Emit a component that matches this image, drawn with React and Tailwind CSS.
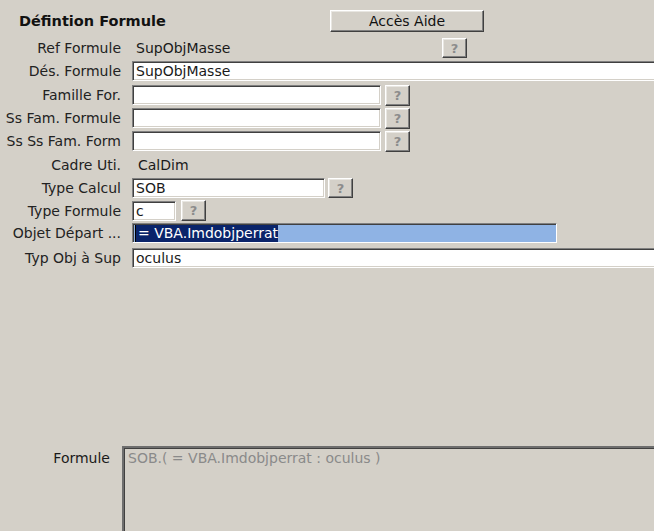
import React from "react";

const sunken =
  "bg-white border-t border-l border-[#808080] border-b border-r border-b-white border-r-white shadow-[inset_1px_1px_0_#404040,inset_-1px_-1px_0_#d4d0c8]";
const raised =
  "bg-[#d4d0c8] border-t border-l border-white border-b border-r border-b-[#404040] border-r-[#404040] shadow-[inset_-1px_-1px_0_#808080,inset_1px_1px_0_#e8e6e1]";

function Q({ className = "" }) {
  return (
    <div className={`${raised} shrink-0 flex items-center justify-center text-[#8c8c8c] text-[13px] font-bold leading-none ${className}`}>
      ?
    </div>
  );
}

function Field({ w, value = "", className = "" }) {
  return (
    <div className={`${sunken} shrink-0 h-[20px] ${w} flex items-center pl-[3px] whitespace-nowrap overflow-hidden leading-[18px] ${className}`}>
      {value}
    </div>
  );
}

function Row({ label, h, children }) {
  return (
    <div className={`flex items-start ${h}`}>
      <div className="w-[121px] shrink-0 text-right leading-[20px] whitespace-nowrap text-[#222]">{label}</div>
      <div className="ml-[11px] shrink-0 flex items-start">{children}</div>
    </div>
  );
}

export default function App() {
  return (
    <div className="w-[654px] h-[531px] overflow-hidden bg-[#d4d0c8] font-['DejaVu_Sans',sans-serif] text-[14px] text-[#1a1a1a]">
      <div className="flex items-start h-[38px] pt-[10px]">
        <div className="w-[330px] shrink-0 pl-[19px] font-bold text-[14.5px] leading-[22px] text-[#111]">Défintion Formule</div>
        <div className={`${raised} shrink-0 w-[154px] h-[22px] flex items-center justify-center text-[#111] leading-none`}>Accès Aide</div>
      </div>

      <Row label="Ref Formule" h="h-[23px]">
        <div className="w-[310px] shrink-0 pl-[4px] leading-[20px]">SupObjMasse</div>
        <Q className="w-[25px] h-[20px]" />
      </Row>
      <Row label="Dés. Formule" h="h-[24px]">
        <Field w="w-[530px]" value="SupObjMasse" />
      </Row>
      <Row label="Famille For." h="h-[23px]">
        <Field w="w-[249px]" />
        <Q className="ml-[4px] w-[25px] h-[21px]" />
      </Row>
      <Row label="Ss Fam. Formule" h="h-[23px]">
        <Field w="w-[249px]" />
        <Q className="ml-[4px] w-[25px] h-[21px]" />
      </Row>
      <Row label="Ss Ss Fam. Form" h="h-[24px]">
        <Field w="w-[249px]" />
        <Q className="ml-[4px] w-[25px] h-[21px]" />
      </Row>
      <Row label="Cadre Uti." h="h-[23px]">
        <div className="pl-[6px] leading-[20px]">CalDim</div>
      </Row>
      <Row label="Type Calcul" h="h-[23px]">
        <Field w="w-[193px]" value="SOB" />
        <Q className="ml-[3px] w-[25px] h-[20px]" />
      </Row>
      <Row label="Type Formule" h="h-[22px]">
        <Field w="w-[44px]" value="c" />
        <Q className="ml-[5px] w-[25px] h-[21px] -mt-[1px]" />
      </Row>
      <Row label="Objet Départ ..." h="h-[25px]">
        <div className="shrink-0 w-[425px] h-[20px] bg-[#8fb3e4] border-t border-l border-[#808080] border-b border-r border-b-white border-r-white shadow-[inset_1px_1px_0_#404040] flex items-center pl-[2px] overflow-hidden">
          <span className="bg-[#0a246a] text-white leading-[17px] h-[17px] whitespace-nowrap pl-[2px] border-l border-black">= VBA.Imdobjperrat</span>
        </div>
      </Row>
      <Row label="Typ Obj à Sup" h="h-[20px]">
        <Field w="w-[530px]" value="oculus" />
      </Row>

      <div className="flex items-start mt-[178px]">
        <div className="w-[110px] shrink-0 text-right leading-[20px] pt-[2px]">Formule</div>
        <div className="ml-[12px] shrink-0 w-[540px] h-[100px] border-t-2 border-l-2 border-[#6e6e6e] shadow-[inset_1px_1px_0_#404040] pl-[4px] pt-[1px] text-[#8a8a8a] text-[14px] leading-[18px] whitespace-nowrap">
          SOB.( = VBA.Imdobjperrat : oculus )
        </div>
      </div>
    </div>
  );
}
